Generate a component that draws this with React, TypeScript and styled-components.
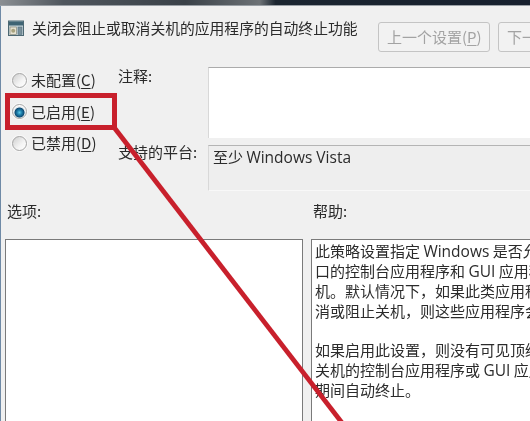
import React from "react";
import styled, { createGlobalStyle } from "styled-components";

const Global = createGlobalStyle`
  html, body { margin: 0; padding: 0; background: #f0f0f0; }
  #root { width: 530px; height: 421px; overflow: hidden; }
`;

const Page = styled.div`
  position: relative;
  width: 530px;
  height: 421px;
  overflow: hidden;
  background: #f0f0f0;
  color: #2b2b2b;
  font-family: "Noto Sans CJK SC", "Open Sans", sans-serif;
  font-size: 15px;
  line-height: 20px;
  filter: blur(0.45px);
  display: flex;
  flex-direction: column;
  u { text-underline-offset: 2px; }
`;

const FrameTop = styled.div`
  height: 5px;
  flex: none;
  background: linear-gradient(90deg, #8b8f93 0, #4f565d 12%, #3a4148 35%, #6d7276 49%, #1b2530 52%, #17202e 100%);
  border-bottom: 1px solid #9aa0a6;
`;

const Dialog = styled.div`
  flex: 1;
  min-height: 0;
  display: flex;
  flex-direction: column;
  border-left: 1px solid #6f8aa6;
`;

const Header = styled.div`
  height: 61px;
  flex: none;
  display: flex;
  align-items: flex-start;
  padding-left: 7px;
  box-sizing: border-box;
`;

const TitleIcon = styled.svg`
  width: 16px;
  height: 16px;
  margin-top: 14px;
  flex: none;
`;

const Title = styled.div`
  margin: 12px 0 0 8px;
  width: 346px;
  font-size: 14.8px;
  white-space: nowrap;
  flex: none;
`;

const NavButton = styled.button<{ $w: number }>`
  flex: none;
  width: ${(p) => p.$w}px;
  height: 30px;
  margin: 16px 8px 0 0;
  padding: 0 0 0 8px;
  text-align: left;
  font: inherit;
  color: #a3a3a3;
  background: #f2f2f2;
  border: 1px solid #c4c4c4;
  border-radius: 3px;
  white-space: nowrap;
  overflow: hidden;
`;

const Settings = styled.div`
  display: flex;
  height: 123px;
  flex: none;
`;

const RadioColumn = styled.div`
  width: 117px;
  flex: none;
  padding: 3px 0 0 11px;
  box-sizing: border-box;
  display: flex;
  flex-direction: column;
  gap: 11.5px;
`;

const RadioRow = styled.label`
  display: flex;
  align-items: center;
  gap: 4px;
  height: 20px;
  white-space: nowrap;
`;

const RadioDot = styled.span<{ $on?: boolean }>`
  width: 15px;
  height: 15px;
  flex: none;
  box-sizing: border-box;
  border-radius: 50%;
  border: 1px solid #a6a6a6;
  box-shadow: 0 0 0 1px #f8f8f8;
  background: ${(p) =>
    p.$on
      ? "radial-gradient(circle at 50% 58%, #5cc8e6 0, #1b7ba8 2.5px, #0f4a72 4.6px, #dfe6ea 5.4px, #ffffff 7px)"
      : "linear-gradient(135deg, #cfcfcf, #f4f4f4 60%, #ffffff)"};
`;

const FieldColumn = styled.div`
  flex: 1;
  min-width: 0;
  display: flex;
  flex-direction: column;
  gap: 7px;
`;

const FieldRow = styled.div`
  display: flex;
`;

const FieldLabel = styled.div<{ $up: number }>`
  width: 90px;
  flex: none;
  margin-top: -${(p) => p.$up}px;
`;

const NoteBox = styled.div`
  flex: 1;
  height: 70px;
  background: #fff;
  border-top: 1px solid #ababab;
  border-left: 1px solid #d8d8d8;
`;

const PlatformBox = styled.div`
  flex: 1;
  height: 46px;
  box-sizing: border-box;
  padding: 1px 0 0 4px;
  background: #eeeeee;
  border-top: 1px solid #b4b4b4;
  border-left: 1px solid #d8d8d8;
  border-bottom: 1px solid #f8f8f8;
  white-space: nowrap;
`;

const Columns = styled.div`
  flex: 1;
  min-height: 0;
  margin-top: 12px;
  padding-left: 4px;
  display: grid;
  grid-template-columns: 298px 1fr;
  grid-template-rows: 37px 1fr;
  column-gap: 8px;
`;

const SectionLabel = styled.div`
  padding-left: 2px;
  margin-top: -1px;
`;

const OptionsBox = styled.div`
  background: #fff;
  border: 1px solid #7a7a7a;
  border-bottom: 0;
`;

const HelpBox = styled.div`
  background: #fff;
  border: 1px solid #7a7a7a;
  border-right: 0;
  border-bottom: 0;
  padding: 1px 0 0 3px;
  overflow: hidden;
`;

const HelpLine = styled.div`
  height: 19.9px;
  line-height: 19.9px;
  white-space: nowrap;
`;

const Latin = styled.span`
  font-family: "Open Sans", sans-serif;
  font-size: 15.5px;
`;

const Annotation = styled.svg`
  position: absolute;
  left: 0;
  top: 0;
  width: 530px;
  height: 421px;
  pointer-events: none;
`;

const help: React.ReactNode[] = [
  <>此策略设置指定 <Latin>Windows</Latin> 是否允许没有可见顶级窗</>,
  <>口的控制台应用程序和 <Latin>GUI</Latin> 应用程序</>,
  <>机。默认情况下，如果此类应用程序</>,
  <>消或阻止关机，则这些应用程序会</>,
  "",
  <>如果启用此设置，则没有可见顶级窗口</>,
  <>关机的控制台应用程序或 <Latin>GUI</Latin> 应用程序</>,
  <>期间自动终止。</>,
];

export default function App() {
  return (
    <Page>
      <Global />
      <FrameTop />
      <Dialog>
        <Header>
          <TitleIcon viewBox="0 0 16 16">
            <rect x="0.5" y="1" width="15" height="14.5" fill="#c9d6da" stroke="#4d6873" />
            <rect x="1" y="1.5" width="14" height="4" fill="#3f6474" />
            <rect x="2" y="7" width="6.5" height="7.5" fill="#e6e2d2" stroke="#7c7c6a" strokeWidth="0.6" />
            <circle cx="5.2" cy="10.7" r="2" fill="#a8a27e" />
            <rect x="10" y="7" width="4" height="7.5" fill="#7a909a" stroke="#557080" strokeWidth="0.6" />
          </TitleIcon>
          <Title>关闭会阻止或取消关机的应用程序的自动终止功能</Title>
          <NavButton $w={112}>上一个设置(<u>P</u>)</NavButton>
          <NavButton $w={112}>下一个设置(<u>N</u>)</NavButton>
        </Header>
        <Settings>
          <RadioColumn>
            <RadioRow><RadioDot /><span>未配置(<u>C</u>)</span></RadioRow>
            <RadioRow><RadioDot $on /><span>已启用(<u>E</u>)</span></RadioRow>
            <RadioRow><RadioDot /><span>已禁用(<u>D</u>)</span></RadioRow>
          </RadioColumn>
          <FieldColumn>
            <FieldRow>
              <FieldLabel $up={1}>注释:</FieldLabel>
              <NoteBox />
            </FieldRow>
            <FieldRow>
              <FieldLabel $up={3}>支持的平台:</FieldLabel>
              <PlatformBox>至少 <Latin>Windows Vista</Latin></PlatformBox>
            </FieldRow>
          </FieldColumn>
        </Settings>
        <Columns>
          <SectionLabel>选项:</SectionLabel>
          <SectionLabel>帮助:</SectionLabel>
          <OptionsBox />
          <HelpBox>
            {help.map((line, i) => (
              <HelpLine key={i}>{line}</HelpLine>
            ))}
          </HelpBox>
        </Columns>
      </Dialog>
      <Annotation viewBox="0 0 530 421">
        <rect x="7.5" y="95.5" width="107" height="32" fill="none" stroke="#c8202c" strokeWidth="5" />
        <line x1="113" y1="126" x2="346" y2="428" stroke="#c8202c" strokeWidth="4.8" />
      </Annotation>
    </Page>
  );
}
